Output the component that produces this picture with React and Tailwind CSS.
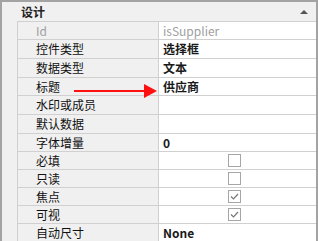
const rows = [
  { label: 'Id', value: 'isSupplier', kind: 'muted', h: 'h-[18px]' },
  { label: '控件类型', value: '选择框', kind: 'bold', h: 'h-[19px]' },
  { label: '数据类型', value: '文本', kind: 'bold', h: 'h-[19px]' },
  { label: '标题', value: '供应商', kind: 'bold', h: 'h-[18px]' },
  { label: '水印或成员', value: '', kind: 'text', h: 'h-[19px]' },
  { label: '默认数据', value: '', kind: 'text', h: 'h-[19px]' },
  { label: '字体增量', value: '0', kind: 'bold', h: 'h-[18px]' },
  { label: '必填', value: false, kind: 'check', h: 'h-[18px]' },
  { label: '只读', value: false, kind: 'check', h: 'h-[18px]' },
  { label: '焦点', value: true, kind: 'check', h: 'h-[18px]' },
  { label: '可视', value: true, kind: 'check', h: 'h-[18px]' },
  { label: '自动尺寸', value: 'None', kind: 'bold', h: 'h-[18px]' },
];

const CheckBox = ({ checked }) => (
  <div className="w-[13px] h-[13px] border border-[#a6a6a6] bg-white flex items-center justify-center">
    {checked && (
      <svg width="9" height="7" viewBox="0 0 9 7">
        <path d="M1 3.5 L3.5 6 L8 1" fill="none" stroke="#777" strokeWidth="1.2" />
      </svg>
    )}
  </div>
);

const Value = ({ row }) => {
  if (row.kind === 'check') {
    return (
      <div className="flex-1 flex items-center justify-center pr-[6px]">
        <CheckBox checked={row.value} />
      </div>
    );
  }
  const cls =
    row.kind === 'muted'
      ? 'text-[#a0a0a0]'
      : row.kind === 'bold'
      ? 'font-bold text-[#1a1a1a]'
      : 'text-black';
  return <div className={`flex-1 pl-[4px] leading-none ${cls}`}>{row.value}</div>;
};

export default function App() {
  return (
    <div
      className="relative w-[318px] h-[241px] overflow-hidden border-x-2 border-t-2 border-[#a3a3a3] bg-[#f0f0f0] text-[12px]"
      style={{ fontFamily: '"Noto Sans CJK SC", "Liberation Sans", sans-serif' }}
    >
      {/* header */}
      <div className="h-[19px] flex items-center pl-[19px] pr-[8px]">
        <span className="font-bold text-[#222] leading-none">设计</span>
        <div className="ml-auto w-0 h-0 border-x-[4px] border-x-transparent border-b-[4px] border-b-[#555]" />
      </div>

      <div className="flex">
        <div className="w-[15px] shrink-0" />
        <div className="flex-1 border-l border-[#d0d0d0]">
          {rows.map((row, i) => (
            <div key={i} className={`${row.h} flex border-t border-[#d0d0d0]`}>
              <div
                className={`w-[140px] shrink-0 flex items-center pl-[18px] leading-none ${
                  row.kind === 'muted' ? 'text-[#a0a0a0]' : 'text-[#111]'
                }`}
              >
                {row.label}
              </div>
              <div className="flex-1 flex items-center bg-white border-l border-[#d0d0d0]">
                <Value row={row} />
              </div>
            </div>
          ))}
        </div>
      </div>

      {/* red arrow */}
      <div className="absolute left-[72px] top-[82px] flex items-center">
        <div className="w-[70px] h-[2px] bg-[#ff1010]" />
        <div className="w-0 h-0 border-y-[7px] border-y-transparent border-l-[13px] border-l-[#ff1010]" />
      </div>
    </div>
  );
}
